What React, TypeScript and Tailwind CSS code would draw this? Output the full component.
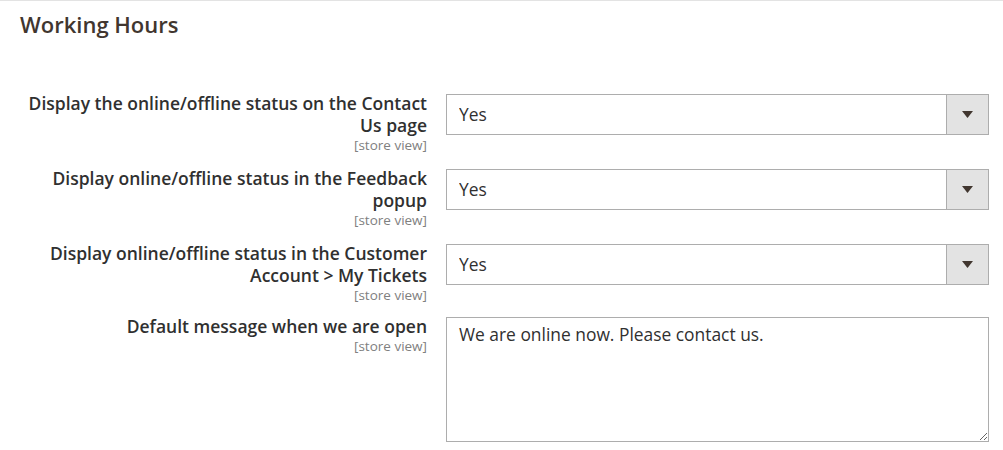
import { ChangeEvent, useState } from 'react'

type SelectRowProps = {
    label: string[]
    value: string
    onChange: (e: ChangeEvent<HTMLSelectElement>) => void
}

function Scope() {
    return <span className="block text-[13.5px] leading-[18px] text-[#808080]">[store view]</span>
}

function Label({ lines }: { lines: string[] }) {
    return (
        <div className="w-[427px] pl-[20px] text-right">
            <div className="text-[17.5px] leading-[22px] font-semibold text-[#303030]">
                {lines.map((l, i) => (
                    <span key={i} className="block">{l}</span>
                ))}
            </div>
            <Scope />
        </div>
    )
}

function SelectRow(props: SelectRowProps) {
    const { label, value, onChange } = props
    return (
        <div className="flex items-start mb-[13px]">
            <Label lines={label} />
            <div className="relative ml-[19px] mt-[2px] w-[543px] h-[41px]">
                <select
                    value={value}
                    onChange={onChange}
                    className="appearance-none w-full h-full border border-[#adadad] bg-white pl-[12px] pr-[50px] text-[17.4px] text-[#303030] outline-none"
                >
                    <option value="1">Yes</option>
                    <option value="0">No</option>
                </select>
                <div className="pointer-events-none absolute right-0 top-0 flex h-full w-[43px] items-center justify-center border border-l border-[#adadad] bg-[#e3e3e3]">
                    <svg width="11" height="7" viewBox="0 0 11 7">
                        <path d="M0 0 L11 0 L5.5 7 Z" fill="#41362f" />
                    </svg>
                </div>
            </div>
        </div>
    )
}

export default function App() {
    const [contact, setContact] = useState<string>('1')
    const [popup, setPopup] = useState<string>('1')
    const [tickets, setTickets] = useState<string>('1')
    const [message, setMessage] = useState<string>('We are online now. Please contact us.')

    return (
        <div className="w-[1003px] h-[450px] overflow-hidden bg-white border-t border-[#e3e3e3] font-['Open_Sans',sans-serif]">
            <h2 className="pl-[20px] pt-[9px] text-[22px] leading-[28px] font-semibold text-[#41362f]">Working Hours</h2>
            <div className="mt-[54px]">
                <SelectRow
                    label={['Display the online/offline status on the Contact', 'Us page']}
                    value={contact}
                    onChange={(e) => setContact(e.target.value)}
                />
                <SelectRow
                    label={['Display online/offline status in the Feedback', 'popup']}
                    value={popup}
                    onChange={(e) => setPopup(e.target.value)}
                />
                <SelectRow
                    label={['Display online/offline status in the Customer', 'Account > My Tickets']}
                    value={tickets}
                    onChange={(e) => setTickets(e.target.value)}
                />
                <div className="flex items-start -mt-[2px]">
                    <Label lines={['Default message when we are open']} />
                    <textarea
                        value={message}
                        onChange={(e) => setMessage(e.target.value)}
                        className="ml-[19px] mt-[2px] w-[543px] h-[125px] border border-[#adadad] px-[12px] py-[5px] text-[17.4px] leading-[22px] text-[#303030] outline-none"
                    />
                </div>
            </div>
        </div>
    )
}
